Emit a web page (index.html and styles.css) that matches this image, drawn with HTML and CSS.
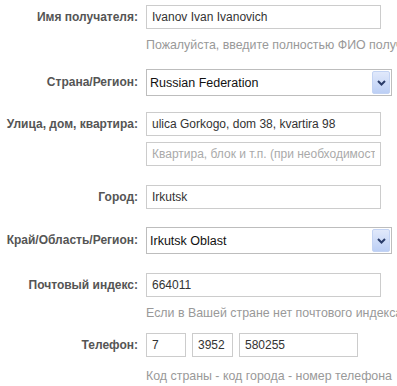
FILE: index.html
```html
<!DOCTYPE html>
<html lang="ru">
<head>
    <meta charset="UTF-8">
    <title>Адрес доставки</title>
    <link rel="stylesheet" href="styles.css">
</head>
<body>

    <div class="form">
        <!-- Recipient -->
        <div class="row row-name">
            <label class="label">Имя получателя:</label>
            <div class="field">
                <input class="input" type="text" value="Ivanov Ivan Ivanovich">
                <p class="hint">Пожалуйста, введите полностью ФИО получателя</p>
            </div>
        </div>

        <div class="row row-country">
            <label class="label">Страна/Регион:</label>
            <div class="field">
                <div class="select">
                    <span>Russian Federation</span>
                    <span class="arrow">
                        <svg width="9" height="6" viewBox="0 0 9 6"><path d="M1 1 L4.5 4.5 L8 1" fill="none" stroke="#2a3c6a" stroke-width="2"/></svg>
                    </span>
                </div>
            </div>
        </div>

        <div class="row row-street">
            <label class="label">Улица, дом, квартира:</label>
            <div class="field">
                <input class="input" type="text" value="ulica Gorkogo, dom 38, kvartira 98">
                <input class="input input-second" type="text" placeholder="Квартира, блок и т.п. (при необходимости)">
            </div>
        </div>

        <div class="row row-city">
            <label class="label">Город:</label>
            <div class="field">
                <input class="input" type="text" value="Irkutsk">
            </div>
        </div>

        <div class="row row-region">
            <label class="label">Край/Область/Регион:</label>
            <div class="field">
                <div class="select">
                    <span>Irkutsk Oblast</span>
                    <span class="arrow">
                        <svg width="9" height="6" viewBox="0 0 9 6"><path d="M1 1 L4.5 4.5 L8 1" fill="none" stroke="#2a3c6a" stroke-width="2"/></svg>
                    </span>
                </div>
            </div>
        </div>

        <div class="row row-zip">
            <label class="label">Почтовый индекс:</label>
            <div class="field">
                <input class="input" type="text" value="664011">
                <p class="hint">Если в Вашей стране нет почтового индекса, введите «None»</p>
            </div>
        </div>

        <div class="row row-phone">
            <label class="label">Телефон:</label>
            <div class="field">
                <div class="phone">
                    <input class="input phone-country" type="text" value="7">
                    <input class="input phone-city" type="text" value="3952">
                    <input class="input phone-number" type="text" value="580255">
                </div>
                <p class="hint hint-phone">Код страны - код города - номер телефона</p>
            </div>
        </div>
    </div>

</body>
</html>
```

FILE: styles.css
```css
body {
    margin: 0;
    background-color: #fff;
    font-family: "Liberation Sans", Arial, sans-serif;
    overflow: hidden;
}
.form {
    width: 397px;
    height: 386px;
    padding-top: 5px;
    box-sizing: border-box;
    overflow: hidden;
}
.row {
    display: grid;
    grid-template-columns: 138px 1fr;
    column-gap: 8px;
    align-items: start;
    min-width: 0;
}
.row-country { margin-top: 16px; }
.row-street { margin-top: 16px; }
.row-city { margin-top: 19px; }
.row-region { margin-top: 18px; }
.row-zip { margin-top: 19px; }
.row-phone { margin-top: 12px; }

.label {
    text-align: right;
    font-size: 12px;
    font-weight: bold;
    color: #555;
    line-height: 24px;
    white-space: nowrap;
}
.row-country .label,
.row-region .label {
    line-height: 27px;
}
.field {
    min-width: 0;
    overflow: hidden;
}
.input {
    display: block;
    box-sizing: border-box;
    width: 235px;
    height: 24px;
    margin: 0;
    padding: 0 5px;
    border: 1px solid #ccc;
    font-family: "Liberation Sans", Arial, sans-serif;
    font-size: 12px;
    color: #333;
    background: #fff;
}
.input::placeholder {
    color: #aaa;
}
.input-second {
    margin-top: 6px;
}
.hint {
    margin: 8px 0 0;
    font-size: 12.4px;
    line-height: 16px;
    color: #999;
    white-space: nowrap;
}
.hint-phone {
    margin-top: 11px;
}
.select {
    display: flex;
    align-items: center;
    justify-content: space-between;
    box-sizing: border-box;
    width: 246px;
    height: 27px;
    padding: 0 1px 0 3px;
    border: 1px solid #bdbdbd;
    font-size: 12.5px;
    color: #111;
    background: #fff;
}
.arrow {
    display: flex;
    align-items: center;
    justify-content: center;
    width: 16px;
    height: 21px;
    border: 1px solid #c3d3f3;
    border-radius: 2px;
    background: linear-gradient(#e1e9fb, #bccff5);
}
.phone {
    display: flex;
    gap: 6px;
}
.phone-country { width: 40px; }
.phone-city { width: 41px; }
.phone-number { width: 119px; }
```
